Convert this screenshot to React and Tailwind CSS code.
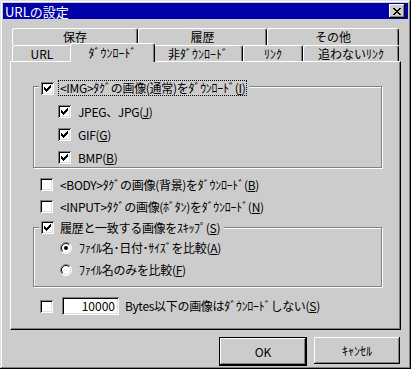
import React from 'react';

const Check = ({ on }) => (
  <span className="w-[13px] h-[13px] shrink-0 bg-white shadow-[inset_1px_1px_#808080,inset_-1px_-1px_#ffffff,inset_2px_2px_#000000,inset_-2px_-2px_#dfdfdf] block">
    {on && (
      <svg width="13" height="13" viewBox="0 0 13 13" shapeRendering="crispEdges">
        <path d="M3 5 L5 7 L9 3 L10 3 L10 5 L5 10 L3 8 Z" fill="#000" />
      </svg>
    )}
  </span>
);

const Radio = ({ on }) => (
  <svg width="12" height="12" viewBox="0 0 12 12" className="shrink-0">
    <circle cx="6" cy="6" r="5.5" fill="#fff" />
    <path d="M2.1 9.9 A5.5 5.5 0 0 1 9.9 2.1" fill="none" stroke="#808080" strokeWidth="1" />
    <path d="M9.9 2.1 A5.5 5.5 0 0 1 2.1 9.9" fill="none" stroke="#ffffff" strokeWidth="1" />
    <path d="M2.8 9.2 A4.5 4.5 0 0 1 9.2 2.8" fill="none" stroke="#000" strokeWidth="1" />
    <path d="M9.2 2.8 A4.5 4.5 0 0 1 2.8 9.2" fill="none" stroke="#dfdfdf" strokeWidth="1" />
    {on && <circle cx="6" cy="6" r="2" fill="#000" />}
  </svg>
);

const Tab = ({ className, children }) => (
  <div className={`h-full flex items-center justify-center border-t border-l border-white border-r border-r-black rounded-tl-[3px] rounded-tr-[3px] shadow-[inset_-1px_0_#808080] text-[12px] leading-none ${className}`}>
    {children}
  </div>
);

const Row = ({ on, children, className }) => (
  <div className={`flex items-center gap-[7px] h-[13px] ${className}`}>
    <Check on={on} />
    <span className="text-[12px] leading-none whitespace-nowrap tracking-[-0.3px]">{children}</span>
  </div>
);

const RadioRow = ({ on, children, className }) => (
  <div className={`flex items-center gap-[7px] h-[12px] ${className}`}>
    <Radio on={on} />
    <span className="text-[12px] leading-none whitespace-nowrap tracking-[-0.3px]">{children}</span>
  </div>
);

const btn = "h-[27px] flex items-center justify-center text-[12px] bg-[#cccccc]";

export default function App() {
  return (
    <div className="w-[411px] h-[369px] bg-[#cccccc] p-[3px] flex flex-col text-black font-['Noto_Sans_CJK_JP',sans-serif] shadow-[inset_-1px_-1px_#000000,inset_1px_1px_#dfdfdf,inset_-2px_-2px_#808080,inset_2px_2px_#ffffff]">
      {/* title bar */}
      <div className="h-[18px] bg-[#0000a8] flex items-center justify-between pl-[2px] pr-[3px]">
        <span className="text-white text-[13px] leading-none">URLの設定</span>
        <div className="w-[16px] h-[14px] bg-[#cccccc] flex items-center justify-center shadow-[inset_-1px_-1px_#000000,inset_1px_1px_#ffffff,inset_-2px_-2px_#808080]">
          <svg width="8" height="7" viewBox="0 0 8 7" shapeRendering="crispEdges">
            <path d="M0 0h2v1h1v1h2V1h1V0h2v1H7v1H6v1H5v1h1v1h1v1h1v1H6V6H5V5H3v1H2v1H0V6h1V5h1V4h1V3H2V2H1V1H0z" fill="#000" />
          </svg>
        </div>
      </div>

      <div className="flex flex-col px-[7px] pt-[9px]">
        {/* back tab row */}
        <div className="flex h-[17px] mx-[2px]">
          <Tab className="w-[126px]">保存</Tab>
          <Tab className="w-[129px]">履歴</Tab>
          <Tab className="w-[132px]">その他</Tab>
        </div>
        {/* front tab row */}
        <div className="flex items-end h-[16px] mx-[2px]">
          <Tab className="w-[60px]">URL</Tab>
          <div className="relative z-10 -mx-[2px] -mb-[1px] w-[85px] h-[19px] shrink-0 bg-[#cccccc]">
            <Tab className="w-full">ﾀﾞｳﾝﾛｰﾄﾞ</Tab>
          </div>
          <Tab className="w-[90px]">非ﾀﾞｳﾝﾛｰﾄﾞ</Tab>
          <Tab className="w-[60px]">ﾘﾝｸ</Tab>
          <Tab className="w-[96px]">追わないﾘﾝｸ</Tab>
        </div>

        {/* panel */}
        <div className="h-[269px] border-t border-l border-white border-r border-b border-r-black border-b-black shadow-[inset_-1px_-1px_#808080] pl-[22px] pt-[24px] flex flex-col">
          {/* group 1 */}
          <div className="relative w-[349px] h-[82px] border border-[#808080] shadow-[1px_1px_0_#ffffff,inset_1px_1px_0_#ffffff] pl-[24px] pt-[18px] flex flex-col gap-[10px]">
            <div className="absolute -top-[7px] left-[5px] bg-[#cccccc] pl-[2px] pr-[2px] flex items-center gap-[4px]">
              <Check on />
              <span className="text-[12px] leading-none whitespace-nowrap tracking-[-0.3px] border border-dotted border-black px-[1px] py-[1px]">
                &lt;IMG&gt;ﾀｸﾞの画像(通常)をﾀﾞｳﾝﾛｰﾄﾞ(<u>I</u>)
              </span>
            </div>
            <Row on>JPEG、JPG(<u>J</u>)</Row>
            <Row on>GIF(<u>G</u>)</Row>
            <Row on>BMP(<u>B</u>)</Row>
          </div>

          <Row className="mt-[10px] ml-[7px]">&lt;BODY&gt;ﾀｸﾞの画像(背景)をﾀﾞｳﾝﾛｰﾄﾞ(<u>B</u>)</Row>
          <Row className="mt-[9px] ml-[7px]">&lt;INPUT&gt;ﾀｸﾞの画像(ﾎﾞﾀﾝ)をﾀﾞｳﾝﾛｰﾄﾞ(<u>N</u>)</Row>

          {/* group 2 */}
          <div className="relative mt-[14px] w-[349px] h-[60px] border border-[#808080] shadow-[1px_1px_0_#ffffff,inset_1px_1px_0_#ffffff] pl-[26px] pt-[14px] flex flex-col gap-[10px]">
            <div className="absolute -top-[7px] left-[5px] bg-[#cccccc] pl-[2px] pr-[4px] flex items-center gap-[6px]">
              <Check on />
              <span className="text-[12px] leading-none whitespace-nowrap tracking-[-0.3px]">履歴と一致する画像をｽｷｯﾌﾟ(<u>S</u>)</span>
            </div>
            <RadioRow on>ﾌｧｲﾙ名･日付･ｻｲｽﾞを比較(<u>A</u>)</RadioRow>
            <RadioRow>ﾌｧｲﾙ名のみを比較(<u>F</u>)</RadioRow>
          </div>

          {/* size limit */}
          <div className="mt-[10px] ml-[7px] flex items-center h-[18px]">
            <Check />
            <div className="ml-[9px] w-[57px] h-[18px] bg-white flex items-center justify-end pr-[4px] text-[12px] leading-none shadow-[inset_1px_1px_#808080,inset_-1px_-1px_#ffffff,inset_2px_2px_#000000,inset_-2px_-2px_#dfdfdf]">
              10000
            </div>
            <span className="ml-[6px] text-[12px] leading-none whitespace-nowrap tracking-[-0.3px]">Bytes以下の画像はﾀﾞｳﾝﾛｰﾄﾞしない(<u>S</u>)</span>
          </div>
        </div>

        {/* buttons */}
        <div className="flex justify-end gap-[7px] mt-[7px] pr-[1px]">
          <div className="w-[88px] border border-black">
            <div className={`${btn} h-[25px] shadow-[inset_-1px_-1px_#000000,inset_1px_1px_#ffffff,inset_-2px_-2px_#808080]`}>OK</div>
          </div>
          <div className={`${btn} w-[86px] shadow-[inset_-1px_-1px_#000000,inset_1px_1px_#ffffff,inset_-2px_-2px_#808080]`}>ｷｬﾝｾﾙ</div>
        </div>
      </div>
    </div>
  );
}
